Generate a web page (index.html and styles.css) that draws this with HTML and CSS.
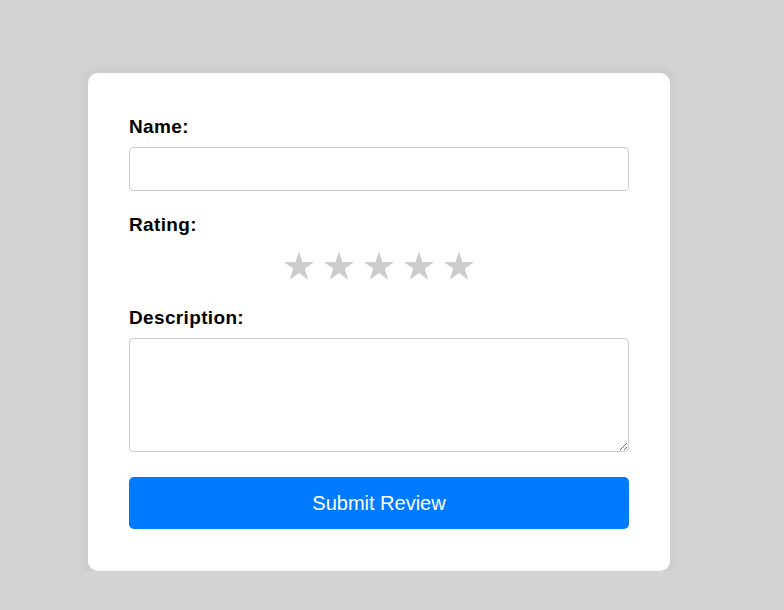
FILE: index.html
```html
<!DOCTYPE html>
<html>
<head>
<meta charset="utf-8">
<link rel="stylesheet" href="styles.css">
</head>
<body>
<div class="page">
  <form class="card">
    <label class="label" for="name">Name:</label>
    <input class="field" id="name" type="text">
    <label class="label label-gap">Rating:</label>
    <div class="stars">
      <svg class="star" viewBox="-16 -16 32 32"><polygon points="0,-15.8 3.54,-4.87 15.03,-4.88 5.73,1.86 9.29,12.78 0,6.03 -9.29,12.78 -5.73,1.86 -15.03,-4.88 -3.54,-4.87"/></svg>
      <svg class="star" viewBox="-16 -16 32 32"><polygon points="0,-15.8 3.54,-4.87 15.03,-4.88 5.73,1.86 9.29,12.78 0,6.03 -9.29,12.78 -5.73,1.86 -15.03,-4.88 -3.54,-4.87"/></svg>
      <svg class="star" viewBox="-16 -16 32 32"><polygon points="0,-15.8 3.54,-4.87 15.03,-4.88 5.73,1.86 9.29,12.78 0,6.03 -9.29,12.78 -5.73,1.86 -15.03,-4.88 -3.54,-4.87"/></svg>
      <svg class="star" viewBox="-16 -16 32 32"><polygon points="0,-15.8 3.54,-4.87 15.03,-4.88 5.73,1.86 9.29,12.78 0,6.03 -9.29,12.78 -5.73,1.86 -15.03,-4.88 -3.54,-4.87"/></svg>
      <svg class="star" viewBox="-16 -16 32 32"><polygon points="0,-15.8 3.54,-4.87 15.03,-4.88 5.73,1.86 9.29,12.78 0,6.03 -9.29,12.78 -5.73,1.86 -15.03,-4.88 -3.54,-4.87"/></svg>
    </div>
    <label class="label" for="desc">Description:</label>
    <textarea class="field area" id="desc"></textarea>
    <button class="submit" type="button">Submit Review</button>
  </form>
</div>
</body>
</html>
```
FILE: styles.css
```css
html, body {
  margin: 0;
  padding: 0;
  background: #d3d3d3;
  font-family: "Liberation Sans", Arial, sans-serif;
}
.page {
  padding: 73px 0 0 88px;
}
.card {
  box-sizing: border-box;
  width: 582px;
  background: #fff;
  border-radius: 10px;
  padding: 42px 41px 42px 41px;
  box-shadow: 0 0 3px 7px rgba(0, 0, 0, 0.025);
  display: flex;
  flex-direction: column;
}
.label {
  display: block;
  font-size: 19px;
  line-height: 21px;
  padding-top: 1px;
  letter-spacing: 0.35px;
  font-weight: bold;
  color: #000;
  margin-bottom: 10px;
}
.label-gap {
  margin-top: 22px;
  margin-bottom: 0;
}
.field {
  box-sizing: border-box;
  width: 500px;
  height: 44px;
  border: 1px solid #ccc;
  border-radius: 4px;
  margin: 0;
  padding: 8px;
  font-family: inherit;
  font-size: 16px;
  background: #fff;
}
.area {
  height: 114px;
  display: block;
}
.stars {
  display: flex;
  justify-content: center;
  gap: 8px;
  margin-top: 16px;
  margin-bottom: 23px;
  height: 32px;
}
.star {
  width: 32px;
  height: 32px;
  fill: #cccccc;
}
.submit {
  margin-top: 25px;
  height: 52px;
  width: 500px;
  border: none;
  border-radius: 5px;
  background: #007bff;
  color: #fff;
  font-family: inherit;
  font-size: 20px;
  cursor: pointer;
}
```
